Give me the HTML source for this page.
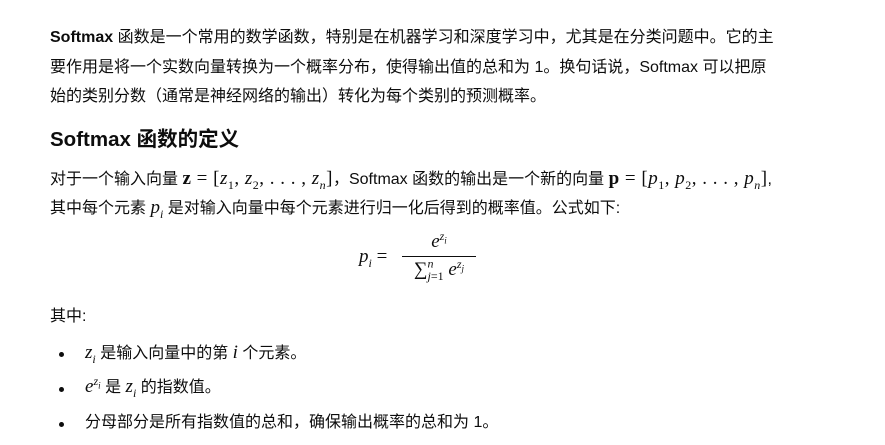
<!DOCTYPE html>
<html><head><meta charset="utf-8"><style>
html,body{margin:0;padding:0;background:#fff;width:885px;height:445px;overflow:hidden}
body{font-family:"Liberation Sans","Noto Sans CJK SC",sans-serif;color:#0d0d0d;font-size:16px}
.p{position:absolute;left:50px;white-space:nowrap;line-height:29.5px}
.m{font-family:"Liberation Serif",serif;font-size:19px}
.v{letter-spacing:0.5px}
.i{font-style:italic}
sub,sup{font-size:12px;line-height:0}
h2{position:absolute;left:50px;top:125px;margin:0;font-size:20.5px;font-weight:bold;line-height:30px}
.dot{position:absolute;left:59px;width:5px;height:5px;border-radius:50%;background:#0d0d0d}
</style></head><body>
<div class="p" style="top:23px"><b>Softmax</b> 函数是一个常用的数学函数，特别是在机器学习和深度学习中，尤其是在分类问题中。它的主<br>要作用是将一个实数向量转换为一个概率分布，使得输出值的总和为 1。换句话说，Softmax 可以把原<br>始的类别分数（通常是神经网络的输出）转化为每个类别的预测概率。</div>
<h2>Softmax 函数的定义</h2>
<div class="p" style="top:165px;line-height:28px">对于一个输入向量 <span class="m v"><b>z</b> = [<span class="i">z</span><sub>1</sub>, <span class="i">z</span><sub>2</sub>, . . . , <span class="i">z<sub>n</sub></span>]</span>，Softmax 函数的输出是一个新的向量 <span class="m v"><b>p</b> = [<span class="i">p</span><sub>1</sub>, <span class="i">p</span><sub>2</sub>, . . . , <span class="i">p<sub>n</sub></span>]</span>,<br>其中每个元素 <span class="m i">p<sub>i</sub></span> 是对输入向量中每个元素进行归一化后得到的概率值。公式如下:</div>
<div style="position:absolute;left:359px;top:246px" class="m"><span class="i">p<sub>i</sub></span> =</div>
<div style="position:absolute;left:402px;top:231px;width:74px;text-align:center" class="m">
<div style="height:25px" class="i">e<sup>z<sub style="font-size:9px">i</sub></sup></div>
<div style="border-top:1px solid #0d0d0d;padding-top:2px;white-space:nowrap">∑<sup style="font-size:12px" class="i">n</sup><sub style="font-size:12px;margin-left:-6px"><span class="i">j</span>=1</sub> <span class="i">e<sup>z<sub style="font-size:9px">j</sub></sup></span></div>
</div>
<div class="p" style="top:302px">其中:</div>
<div class="dot" style="top:352px"></div>
<div class="p" style="left:85px;top:338px"><span class="m i">z<sub>i</sub></span> 是输入向量中的第 <span class="m i">i</span> 个元素。</div>
<div class="dot" style="top:387px"></div>
<div class="p" style="left:85px;top:372px"><span class="m i">e<sup>z<sub style="font-size:9px">i</sub></sup></span> 是 <span class="m i">z<sub>i</sub></span> 的指数值。</div>
<div class="dot" style="top:422px"></div>
<div class="p" style="left:85px;top:408px">分母部分是所有指数值的总和，确保输出概率的总和为 1。</div>
</body></html>
